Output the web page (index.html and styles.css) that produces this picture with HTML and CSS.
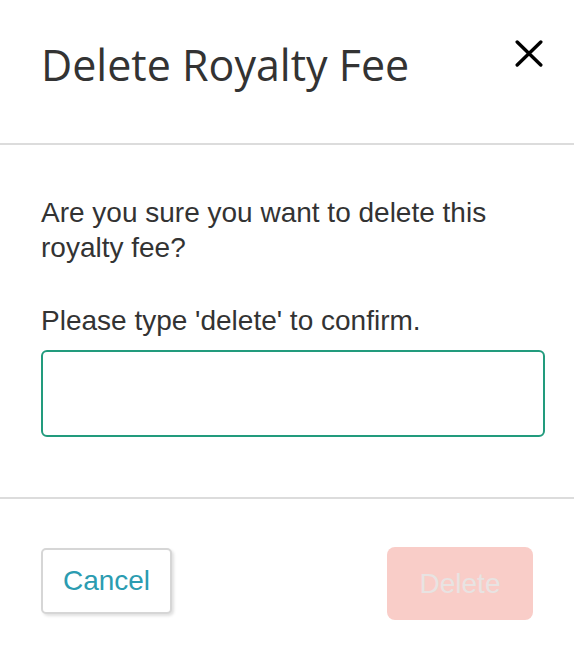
FILE: index.html
```html
<!DOCTYPE html>
<html>
<head>
<meta charset="utf-8">
<link rel="stylesheet" href="styles.css">
</head>
<body>
<div class="modal">
  <div class="modal-header">
    <h1 class="modal-title">Delete Royalty Fee</h1>
    <button class="close-btn" aria-label="Close">
      <svg width="28" height="27" viewBox="0 0 28 27"><path d="M2.2 2 L25.8 25 M25.8 2 L2.2 25" stroke="#000" stroke-width="3.4" stroke-linecap="round"/></svg>
    </button>
  </div>
  <div class="modal-body">
    <p class="question">Are you sure you want to delete this royalty fee?</p>
    <label class="confirm-label">Please type 'delete' to confirm.</label>
    <input class="confirm-input" type="text">
  </div>
  <div class="modal-footer">
    <button class="btn btn-cancel">Cancel</button>
    <button class="btn btn-delete">Delete</button>
  </div>
</div>
</body>
</html>
```
FILE: styles.css
```css
html, body {
  margin: 0;
  padding: 0;
  background: #fff;
}
.modal {
  width: 574px;
  height: 656px;
  display: flex;
  flex-direction: column;
}
.modal-header {
  height: 143px;
  border-bottom: 2px solid #dcdcdc;
  display: flex;
  justify-content: space-between;
  align-items: flex-start;
  padding: 0 31px 0 41px;
  box-sizing: content-box;
}
.modal-title {
  margin: 39px 0 0;
  font-family: "Open Sans", sans-serif;
  font-weight: 400;
  font-size: 43px;
  line-height: 52px;
  color: #333;
}
.close-btn {
  margin-top: 40px;
  padding: 0;
  border: 0;
  background: none;
  width: 28px;
  height: 27px;
}
.close-btn svg { display: block; }
.modal-body {
  padding: 0 29px 0 41px;
  display: flex;
  flex-direction: column;
  height: 352px;
  border-bottom: 2px solid #dcdcdc;
  font-family: "Liberation Sans", Arial, sans-serif;
  color: #333;
}
.question {
  margin: 50px 0 0;
  font-size: 28px;
  line-height: 35px;
}
.confirm-label {
  margin-top: 38px;
  font-size: 28px;
  line-height: 35px;
}
.confirm-input {
  margin-top: 12px;
  height: 87px;
  box-sizing: border-box;
  border: 2px solid #229b7d;
  border-radius: 6px;
  outline: none;
  width: 100%;
}
.modal-footer {
  display: flex;
  justify-content: space-between;
  align-items: flex-start;
  padding: 48px 41px 0 41px;
}
.btn {
  font-family: "Liberation Sans", Arial, sans-serif;
  font-size: 28px;
  border-radius: 5px;
}
.btn-cancel {
  margin-top: 1px;
  width: 131px;
  height: 66px;
  background: #fff;
  color: #2b9cb1;
  border: 2px solid #d6d6d6;
  box-shadow: 2px 2px 3px rgba(0,0,0,0.12);
}
.btn-delete {
  width: 146px;
  height: 73px;
  background: #f9cdc8;
  color: #e8e3e2;
  border: 0;
  border-radius: 8px;
}
```
